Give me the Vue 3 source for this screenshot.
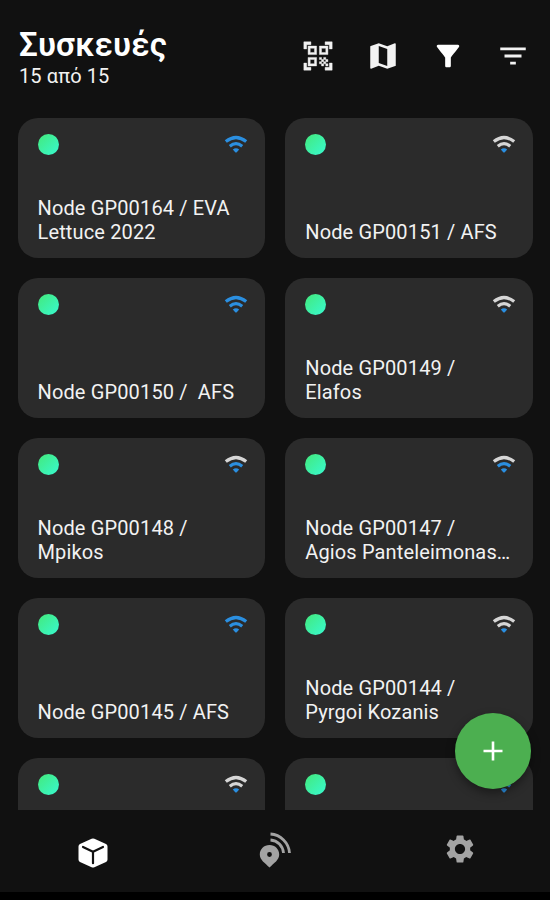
<script setup>
import { ref } from 'vue'

// signal = number of blue bars in the wifi icon
const devices = ref([
  { id: 1, name: 'Node GP00164 / EVA Lettuce 2022', signal: 3 },
  { id: 2, name: 'Node GP00151 / AFS', signal: 1 },
  { id: 3, name: 'Node GP00150 /  AFS', signal: 3 },
  { id: 4, name: 'Node GP00149 /\nElafos', signal: 1 },
  { id: 5, name: 'Node GP00148 /\nMpikos', signal: 2 },
  { id: 6, name: 'Node GP00147 /\nAgios Panteleimonas…', signal: 2 },
  { id: 7, name: 'Node GP00145 / AFS', signal: 3 },
  { id: 8, name: 'Node GP00144 /\nPyrgoi Kozanis', signal: 1 },
  { id: 9, name: '', signal: 1 },
  { id: 10, name: '', signal: 2 },
])

// Header action icons, all on a 24x24 grid
const actions = [
  {
    name: 'scan',
    path: 'M9.5 6.5v3h-3v-3h3M11 5H5v6h6V5zm-1.5 9.5v3h-3v-3h3M11 13H5v6h6v-6zm6.5-6.5v3h-3v-3h3M19 5h-6v6h6V5zm-6 8h1.5v1.5H13V13zm1.5 1.5H16V16h-1.5v-1.5zM16 13h1.5v1.5H16V13zm-3 3h1.5v1.5H13V16zm1.5 1.5H16V19h-1.5v-1.5zM16 16h1.5v1.5H16V16zm1.5-1.5H19V16h-1.5v-1.5zm0 3H19V19h-1.5v-1.5zM22 7h-2V4h-3V2h5v5zm0 15v-5h-2v3h-3v2h5zM2 22h5v-2H4v-3H2v5zM2 2v5h2V4h3V2H2z',
  },
  {
    name: 'map',
    path: 'M20.5 3l-.16.03L15 5.1 9 3 3.36 4.9c-.21.07-.36.25-.36.48V20.5c0 .28.22.5.5.5l.16-.03L9 18.9l6 2.1 5.64-1.9c.21-.07.36-.25.36-.48V3.5c0-.28-.22-.5-.5-.5zM15 19l-6-2.11V5l6 2.11V19z',
  },
  {
    name: 'filter',
    path: 'M4.25 5.61C6.27 8.2 10 13 10 13v6c0 .55.45 1 1 1h2c.55 0 1-.45 1-1v-6s3.72-4.8 5.74-7.39A.998.998 0 0 0 18.95 4H5.04c-.83 0-1.3.95-.79 1.61z',
  },
  {
    name: 'sort',
    path: 'M10 18h4v-2h-4v2zM3 6v2h18V6H3zm3 7h12v-2H6v2z',
  },
]
</script>

<template>
  <div class="app">
    <!-- Title and actions -->
    <header class="header">
      <div class="heading">
        <h1>Συσκευές</h1>
        <p>15 από 15</p>
      </div>
      <div class="actions">
        <button v-for="action in actions" :key="action.name" :class="action.name">
          <svg viewBox="0 0 24 24"><path :d="action.path" /></svg>
        </button>
      </div>
    </header>

    <!-- Device grid -->
    <main class="grid">
      <article v-for="device in devices" :key="device.id" class="card">
        <div class="card-top">
          <span class="status"></span>
          <svg class="wifi" viewBox="0 0 24 18">
            <path :class="{ on: device.signal >= 3 }" d="M1.8 6.6Q12 -1.6 22.2 6.6" />
            <path :class="{ on: device.signal >= 2 }" d="M5.8 11.2Q12 6.2 18.2 11.2" />
            <path class="dot" :class="{ on: device.signal >= 1 }" d="M8.8 14.4Q12 12.2 15.2 14.4L12.8 17.2Q12 18 11.2 17.2Z" />
          </svg>
        </div>
        <h2>{{ device.name }}</h2>
      </article>
    </main>

    <button class="fab">
      <svg viewBox="0 0 20 20"><path d="M10 0.5V19.5M0.5 10H19.5" /></svg>
    </button>

    <!-- Bottom navigation -->
    <nav class="tabs">
      <button class="tab active">
        <svg class="box" viewBox="0 0 30 30">
          <path d="M13.6 .8Q15 .1 16.4 .8L28 6Q29.5 6.8 29.5 8.4V21.6Q29.5 23.2 28 24L16.4 29.2Q15 29.9 13.6 29.2L2 24Q.5 23.2 .5 21.6V8.4Q.5 6.8 2 6Z" />
          <path class="edge" d="M5 9L15 13.8L25 9M15 13.8V25.2" />
        </svg>
      </button>
      <button class="tab">
        <svg class="pin" viewBox="0 0 33 36">
          <path fill-rule="evenodd" d="M10.5 13C4.9 13 .8 17.200 .8 22.500C.8 28 6 31 10.500 35.500C15 31 20.200 28 20.200 22.500C20.200 17.200 16.100 13 10.500 13ZM10.500 20.100A2.400 2.400 0 1 1 10.500 24.900A2.400 2.400 0 1 1 10.500 20.100Z" />
          <path class="wave" d="M11.5 8C18.500 8.500 24 14 24.500 21" />
          <path class="wave" d="M11.500 2C21.500 2.500 30 11 30.500 21" />
        </svg>
      </button>
      <button class="tab">
        <svg class="gear" viewBox="0 0 24 24">
          <path d="M19.14 12.94c.04-.3.06-.61.06-.94 0-.32-.02-.64-.07-.94l2.03-1.58c.18-.14.23-.41.12-.61l-1.92-3.32c-.12-.22-.37-.29-.59-.22l-2.39.96c-.5-.38-1.03-.7-1.62-.94l-.36-2.54c-.04-.24-.24-.41-.48-.41h-3.84c-.24 0-.43.17-.47.41l-.36 2.54c-.59.24-1.13.57-1.62.94l-2.39-.96c-.22-.08-.47 0-.59.22L2.74 8.87c-.12.21-.08.47.12.61l2.03 1.58c-.05.3-.09.63-.09.94s.02.64.07.94l-2.03 1.58c-.18.14-.23.41-.12.61l1.92 3.32c.12.22.37.29.59.22l2.39-.96c.5.38 1.03.7 1.62.94l.36 2.54c.05.24.24.41.48.41h3.84c.24 0 .44-.17.47-.41l.36-2.54c.59-.24 1.13-.56 1.62-.94l2.39.96c.22.08.47 0 .59-.22l1.92-3.32c.12-.22.07-.47-.12-.61l-2.01-1.58zM12 15.6c-1.98 0-3.6-1.62-3.6-3.6s1.62-3.6 3.6-3.6 3.6 1.62 3.6 3.6-1.62 3.6-3.6 3.6z" />
        </svg>
      </button>
    </nav>
  </div>
</template>

<style>
body {
  margin: 0;
  background: #000;
}
</style>

<style scoped>
.app {
  position: relative;
  display: flex;
  flex-direction: column;
  width: 550px;
  height: 900px;
  box-sizing: border-box;
  border-bottom: 8px solid #000;
  background: #111;
  color: #f2f2f2;
  font-family: Roboto, sans-serif;
  overflow: hidden;
}

button {
  padding: 0;
  border: none;
  background: none;
  cursor: pointer;
}

svg {
  display: block;
}

.header {
  display: flex;
  justify-content: space-between;
  height: 118px;
  padding: 0 20px 0 19px;
  box-sizing: border-box;
}

.heading {
  padding-top: 25px;
}

h1 {
  margin: 0;
  color: #fff;
  font-size: 33px;
  font-weight: 600;
  line-height: 39px;
  letter-spacing: 0.2px;
}

.heading p {
  margin: 0;
  font-size: 20px;
  line-height: 24px;
  letter-spacing: 0.1px;
}

.actions {
  display: flex;
  gap: 31px;
  height: 34px;
  padding-top: 39px;
}

.actions svg {
  width: 34px;
  height: 34px;
  fill: #f2f2f2;
}

.actions .scan svg {
  stroke: #f2f2f2;
  stroke-width: 0.3;
}

.actions .filter svg {
  fill: #fff;
}

.grid {
  flex: 1;
  display: grid;
  grid-template-columns: 1fr 1fr;
  grid-auto-rows: 140px;
  gap: 20px 20.5px;
  min-height: 0;
  padding: 0 17.5px;
  overflow: hidden;
}

.card {
  display: flex;
  flex-direction: column;
  justify-content: space-between;
  box-sizing: border-box;
  padding: 16px 17px 14px 20px;
  border-radius: 20px;
  background: #2b2b2b;
}

.card-top {
  display: flex;
  justify-content: space-between;
}

.status {
  width: 21px;
  height: 21px;
  border-radius: 50%;
  background: linear-gradient(135deg, #43e97b, #38f9d0);
}

.wifi {
  width: 24px;
  height: 18px;
  margin-top: 1px;
  fill: none;
  stroke: #d6d6d6;
  stroke-width: 3.2;
}

.wifi .on {
  stroke: #2b8fe0;
}

.wifi .dot {
  fill: #2b8fe0;
  stroke: none;
}

h2 {
  margin: 0;
  font-size: 20px;
  font-weight: 400;
  line-height: 24px;
  letter-spacing: 0.14px;
  white-space: pre-wrap;
}

/* Floating add button over the grid */
.fab {
  position: absolute;
  right: 19px;
  bottom: 103px;
  display: flex;
  align-items: center;
  justify-content: center;
  width: 76px;
  height: 76px;
  border-radius: 50%;
  background: #4caf50;
  box-shadow: 0 4px 10px rgba(0, 0, 0, 0.4);
}

.fab svg {
  width: 20px;
  height: 20px;
  stroke: #fff;
  stroke-width: 2.6;
}

.tabs {
  display: grid;
  grid-template-columns: repeat(3, 1fr);
  height: 82px;
  padding: 0 0 0 1px;
}

.tab {
  display: flex;
  justify-content: center;
  align-items: flex-start;
}

.tab svg {
  fill: #a3a3a3;
}

.tab .box {
  width: 30px;
  height: 30px;
  margin-top: 28px;
  fill: #fff;
}

.box .edge {
  fill: none;
  stroke: #111;
  stroke-width: 2.2;
  stroke-linecap: round;
}

.tab .pin {
  width: 33px;
  height: 36px;
  margin-top: 22px;
}

.pin .wave {
  fill: none;
  stroke: #a3a3a3;
  stroke-width: 2.8;
}

.tab .gear {
  width: 34px;
  height: 34px;
  margin: 22px 0 0 3px;
}
</style>
